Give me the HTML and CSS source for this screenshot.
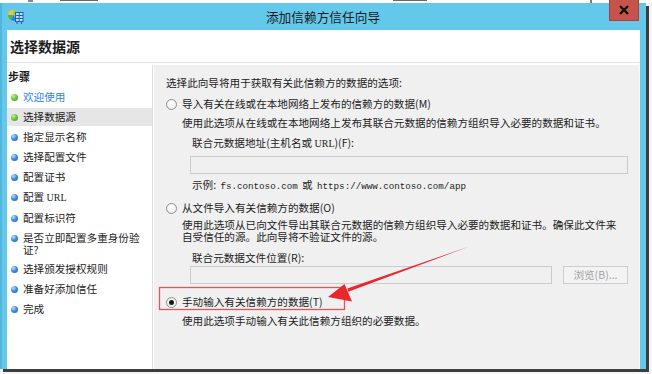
FILE: index.html
```html
<!DOCTYPE html>
<html lang="zh-CN">
<head>
<meta charset="utf-8">
<title>添加信赖方信任向导</title>
<link rel="stylesheet" href="styles.css">
</head>
<body>
<div class="screen">
  <div class="topstrip"></div>
  <div class="window">
    <div class="titlebar">
      <svg class="appicon" width="17" height="17" viewBox="0 0 17 17">
        <path d="M6.5 1.5 A5.5 5.5 0 0 0 1 7 L6.5 7 Z" fill="#f2c230"/>
        <path d="M1 7 A5.5 5.5 0 0 0 4 12 L6.5 7 Z" fill="#5bb531"/>
        <path d="M6.5 1.5 A5.5 5.5 0 0 1 11 4 L6.5 7 Z" fill="#8fd14a"/>
        <path d="M4 12 A5.5 5.5 0 0 0 9 12.3 L6.5 7 Z" fill="#2f7fd8"/>
        <rect x="8.5" y="4.5" width="7.5" height="9" fill="#bfe2ff" stroke="#1f5fc4" stroke-width="1"/>
        <path d="M8.5 7.5 H16 M8.5 10.5 H16 M12.2 4.5 V13.5" stroke="#1f5fc4" stroke-width="1"/>
        <path d="M10 13.5 V16 M14.5 13.5 V16" stroke="#1f5fc4" stroke-width="1"/>
      </svg>
      <div class="title">添加信赖方信任向导</div>
      <div class="close">
        <svg width="12" height="10" viewBox="0 0 12 10"><path d="M2 1 L10 9 M10 1 L2 9" stroke="#111" stroke-width="2.4"/></svg>
      </div>
    </div>
    <div class="content">
      <div class="header">选择数据源</div>
      <div class="panes">
        <div class="steps">
          <div class="steps-title">步骤</div>
          <ul class="step-list">
            <li class="step link"><span class="dot green"></span><span class="label">欢迎使用</span></li>
            <li class="step current"><span class="dot green"></span><span class="label">选择数据源</span></li>
            <li class="step"><span class="dot blue"></span><span class="label">指定显示名称</span></li>
            <li class="step"><span class="dot blue"></span><span class="label">选择配置文件</span></li>
            <li class="step"><span class="dot blue"></span><span class="label">配置证书</span></li>
            <li class="step"><span class="dot blue"></span><span class="label">配置 <span class="serif">URL</span></span></li>
            <li class="step"><span class="dot blue"></span><span class="label">配置标识符</span></li>
            <li class="step multi"><span class="dot blue"></span><span class="label">是否立即配置多重身份验证?</span></li>
            <li class="step"><span class="dot blue"></span><span class="label">选择颁发授权规则</span></li>
            <li class="step"><span class="dot blue"></span><span class="label">准备好添加信任</span></li>
            <li class="step"><span class="dot blue"></span><span class="label">完成</span></li>
          </ul>
        </div>
        <div class="main">
          <div class="intro">选择此向导将用于获取有关此信赖方的数据的选项:</div>

          <div class="opt opt-1"><span class="radio"></span><span>导入有关在线或在本地网络上发布的信赖方的数据(M)</span></div>
          <div class="desc desc-1">使用此选项从在线或在本地网络上发布其联合元数据的信赖方组织导入必要的数据和证书。</div>
          <div class="field-label label-1">联合元数据地址(主机名或 <span class="serif">URL</span>)(F):</div>
          <div class="input input-1"></div>
          <div class="example">示例: <span class="mono">fs.contoso.com</span> 或 <span class="mono">https://www.contoso.com/app</span></div>

          <div class="opt opt-2"><span class="radio"></span><span>从文件导入有关信赖方的数据(O)</span></div>
          <div class="desc desc-2">使用此选项从已向文件导出其联合元数据的信赖方组织导入必要的数据和证书。确保此文件来自受信任的源。此向导将不验证文件的源。</div>
          <div class="field-label label-2">联合元数据文件位置(R):</div>
          <div class="input-row">
            <div class="input"></div>
            <div class="button">浏览(B)...</div>
          </div>

          <div class="opt opt-3"><span class="radio checked"></span><span>手动输入有关信赖方的数据(T)</span></div>
          <div class="desc desc-3">使用此选项手动输入有关此信赖方组织的必要数据。</div>
        </div>
      </div>
    </div>
  </div>
  <svg class="annot" width="652" height="374" viewBox="0 0 652 374">
    <rect x="159.5" y="287.5" width="185" height="22" fill="none" stroke="#e35454" stroke-width="1.3"/>
    <polygon points="469,246.6 348.3,291.8 347.3,288.6" fill="#e8282c"/>
    <polygon points="328,297 344.5,284 352,301.5" fill="#e8282c"/>
  </svg>
</div>
</body>
</html>
```

FILE: styles.css
```css
* { box-sizing: border-box; }

html, body {
  margin: 0;
  padding: 0;
  background: #ffffff;
}

body {
  font-family: "Noto Sans CJK SC", "Noto Sans", sans-serif;
  color: #1c1c1c;
}

.screen {
  position: relative;
  width: 652px;
  height: 374px;
  overflow: hidden;
  background: #f4f4f4;
}

.topstrip {
  height: 3px;
  background:
    linear-gradient(#8a8a8a, #8a8a8a) 28px 0 / 5px 2px no-repeat,
    linear-gradient(#6a6a6a, #6a6a6a) 60px 0 / 38px 1px no-repeat,
    linear-gradient(#6a6a6a, #6a6a6a) 393px 0 / 34px 1px no-repeat,
    linear-gradient(#7a7a7a, #7a7a7a) 590px 0 / 2px 3px no-repeat,
    #ffffff;
}

.window {
  position: relative;
  width: 646px;
  height: 366px;
  background: #64c8ea;
  box-shadow: inset 2px 0 0 #52b6dc, 3px 3px 0 #3d3d3d;
  display: flex;
  flex-direction: column;
}

.titlebar {
  position: relative;
  height: 27px;
  display: flex;
  align-items: center;
  flex: none;
}

.appicon {
  margin-left: 7px;
  flex: none;
}

.title {
  flex: 1;
  text-align: center;
  padding-right: 24px;
  font-size: 12.7px;
  line-height: 16px;
  color: #1a1a1a;
}

.close {
  position: absolute;
  top: -3px;
  right: 7px;
  width: 30px;
  height: 21px;
  background: #c7544c;
  border: 1px solid #a5423b;
  border-top: none;
  display: flex;
  align-items: center;
  justify-content: center;
}

.content {
  flex: 1;
  margin: 0 6px 0 7px;
  background: #ffffff;
  display: flex;
  flex-direction: column;
}

.header {
  height: 33px;
  padding-left: 3px;
  font-size: 14px;
  font-weight: 700;
  line-height: 32px;
  border-bottom: 1px solid #e4e4e4;
  flex: none;
}

.panes {
  flex: 1;
  margin-top: 2px;
  display: flex;
}

.steps {
  width: 146px;
  flex: none;
  background: #ffffff;
  border-right: 1px solid #dedede;
}

.steps-title {
  height: 22px;
  padding-left: 1px;
  font-size: 11px;
  font-weight: 700;
  line-height: 22px;
}

.step-list {
  list-style: none;
  margin: 0;
  padding: 0;
}

.step {
  display: flex;
  align-items: flex-start;
  gap: 5px;
  padding: 4px 0 4px 4px;
  font-size: 10.6px;
  line-height: 12px;
}

.step.current {
  background: #e6e6e6;
  margin: 1px 0;
  padding: 3px 0 3px 4px;
}

.step.multi {
  line-height: 11.5px;
  padding-bottom: 4px;
}

.step.link .label {
  color: #2f86e6;
}

.label {
  width: 120px;
}

.dot {
  flex: none;
  width: 7px;
  height: 7px;
  margin-top: 2.5px;
  border-radius: 50%;
}

.dot.green {
  background: radial-gradient(circle at 35% 30%, #c9f29a 0, #6cc83c 45%, #3e9a1e 100%);
}

.dot.blue {
  background: radial-gradient(circle at 35% 30%, #bfe0ff 0, #3f8fe8 45%, #1d5fc0 100%);
}

.serif {
  font-family: "Liberation Serif", serif;
  font-size: 10px;
}

.mono {
  font-family: "Liberation Mono", monospace;
  font-size: 9.2px;
  margin: 0 2px;
}

.main {
  flex: 1;
  position: relative;
  margin: 0 1px 0 1px;
  padding: 12px 11px 0 12px;
  background: #f0f0f0;
  font-size: 10.6px;
  line-height: 12px;
}

.intro {
  height: 12px;
}

.opt {
  display: flex;
  align-items: center;
  gap: 5px;
  height: 12px;
}

.opt-1 { margin-top: 9px; }
.opt-2 { margin-top: 11px; }
.opt-3 { margin-top: 12px; }

.radio {
  flex: none;
  width: 11px;
  height: 11px;
  border-radius: 50%;
  border: 1px solid #8c8c8c;
  background: radial-gradient(circle at 50% 40%, #ffffff 0, #f2f2f2 60%, #e2e2e2 100%);
  display: flex;
  align-items: center;
  justify-content: center;
}

.radio.checked::after {
  content: "";
  width: 5px;
  height: 5px;
  border-radius: 50%;
  background: #1a1a1a;
}

.desc {
  margin-left: 16px;
  max-width: 440px;
}

.desc-1 { margin-top: 7px; }
.desc-2 { margin-top: 5px; }
.desc-3 { margin-top: 7px; }

.field-label {
  margin-left: 26px;
}

.label-1 { margin-top: 8px; }
.label-2 { margin-top: 9px; }

.input {
  height: 18px;
  border: 1px solid #cbcbcb;
  background: #f0f0f0;
}

.input-1 {
  margin: 6px 0 0 24px;
}

.example {
  margin: 5px 0 0 26px;
  height: 12px;
}

.input-row {
  display: flex;
  gap: 11px;
  margin: 2px 0 0 24px;
}

.input-row .input {
  flex: 1;
}

.button {
  width: 65px;
  height: 18px;
  border: 1px solid #cdcdcd;
  background: #f3f3f3;
  color: #a2a2a2;
  text-align: center;
  line-height: 16px;
  font-size: 10.6px;
}

.annot {
  position: absolute;
  top: 0;
  left: 0;
  pointer-events: none;
}
```
